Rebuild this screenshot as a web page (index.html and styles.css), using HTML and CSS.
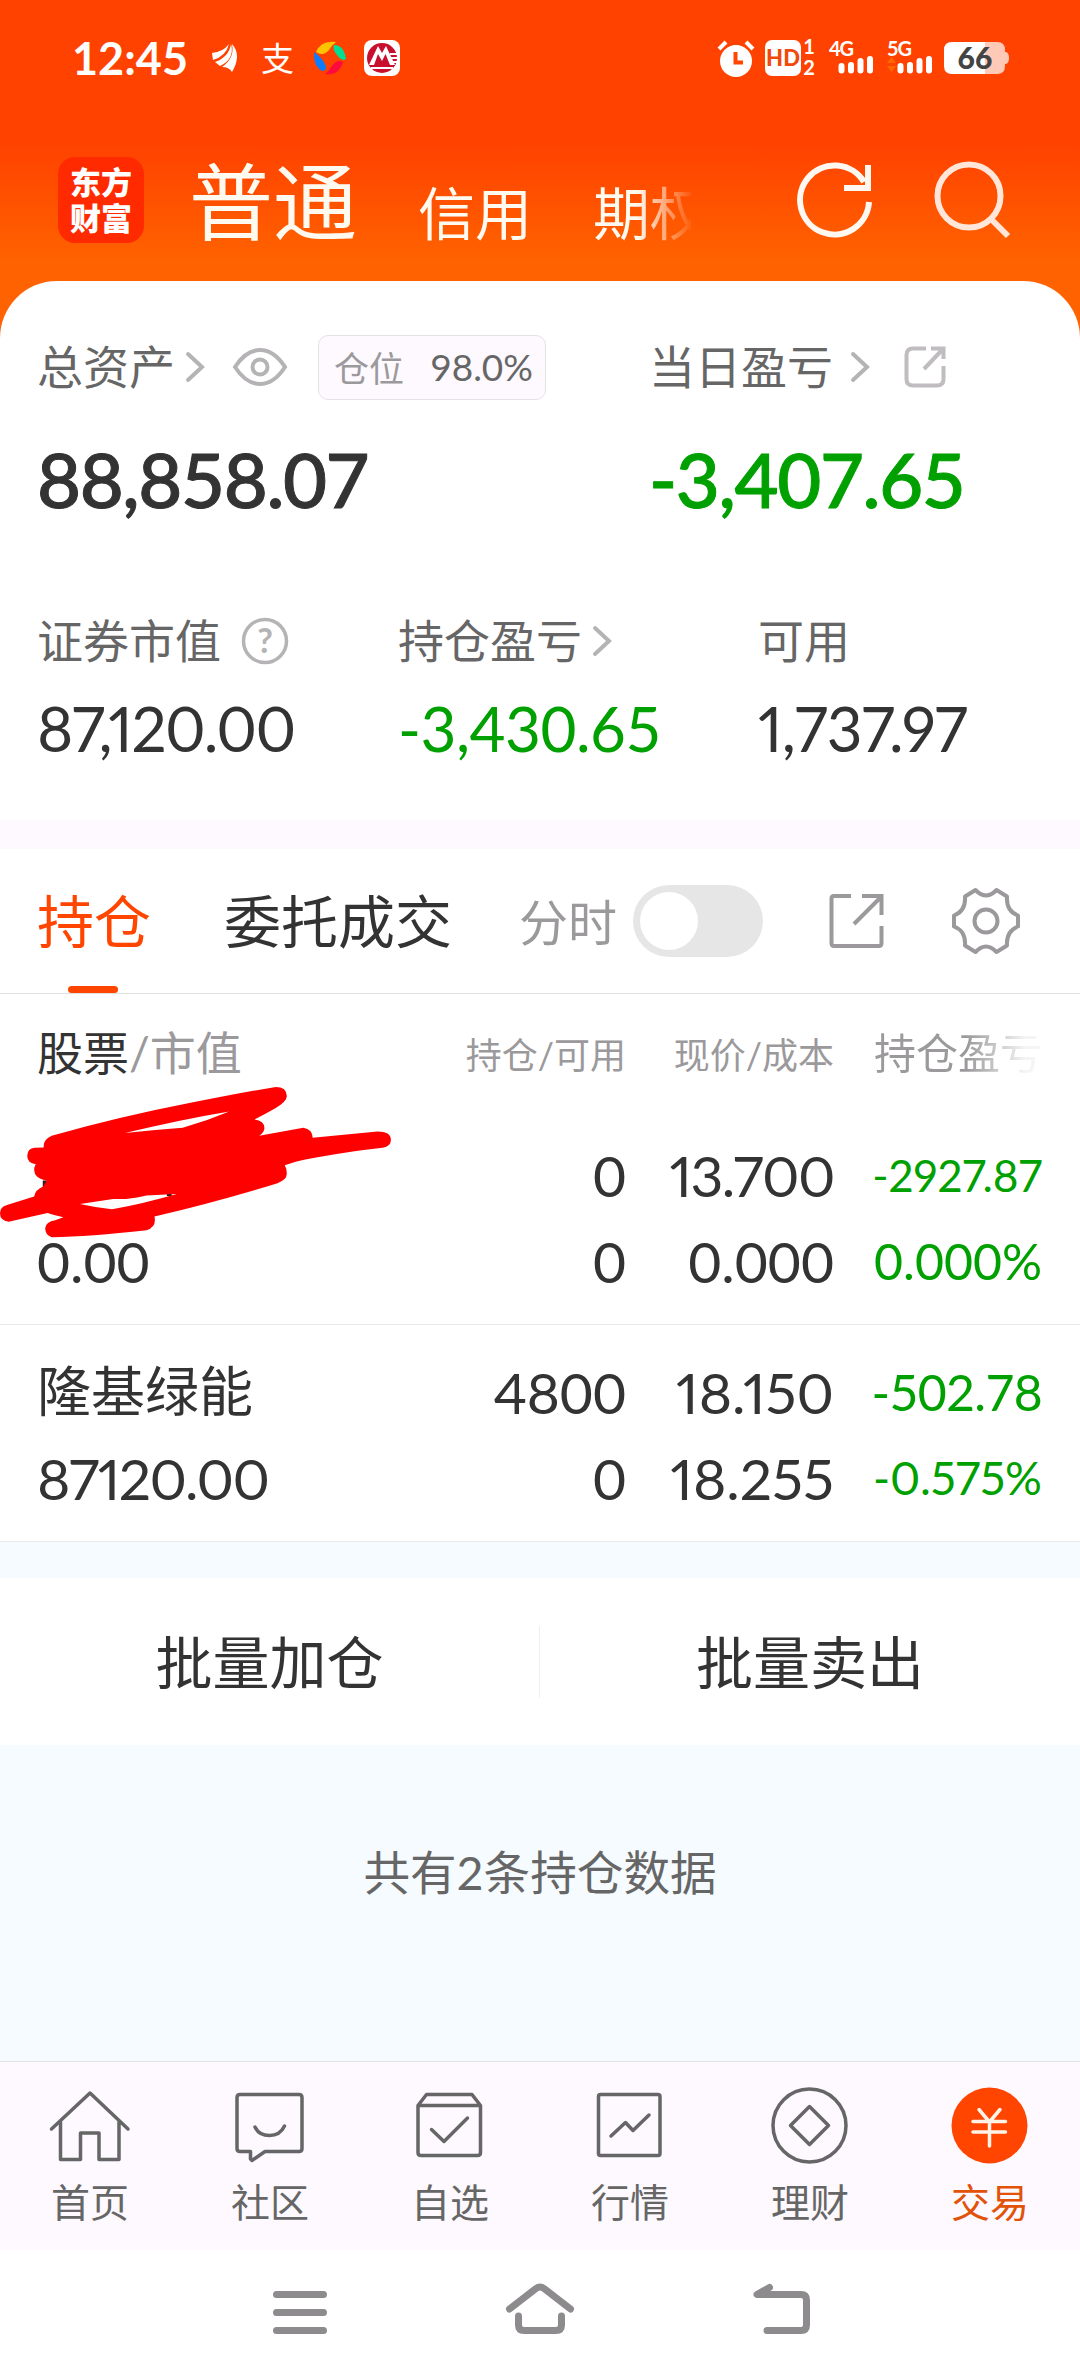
FILE: index.html
```html
<!DOCTYPE html>
<html lang="zh-CN">

<head>
    <meta charset="UTF-8">
    <meta name="viewport" content="width=device-width, initial-scale=1.0">
    <title>交易 - 持仓</title>
    <link rel="stylesheet" href="styles.css">
</head>

<body>
    <div class="hero">
        <div class="status">
            <span class="time">12:45</span>
            <svg class="s_wing" width="26" height="30" viewBox="0 0 26 30" fill="#fff">
                <path d="M0 10 Q11 9 17 1 Q14 13 1 17Z" />
                <path d="M3 19 Q17 14 19 1 Q23 16 8 23Z" />
                <path d="M10 24 Q23 15 20 1 Q30 12 20 29 Q17 24 10 24Z" />
            </svg>
            <span class="s_pay">支</span>
            <svg class="s_ball" width="36" height="36" viewBox="0 0 36 36">
                <path fill="#ffc400" d="M4 12 Q9 0 24 2 Q20 5 17 10 Q11 17 4 12Z" />
                <path fill="#00e092" d="M22 5 Q32 5 34 19 Q30 22 25 15 Q20 9 22 5Z" />
                <path fill="#ff0a3c" d="M31 22 Q27 36 13 34 Q17 31 20 26 Q25 19 31 22Z" />
                <path fill="#0a7cff" d="M2 12 Q10 18 13 24 Q16 31 10 31 Q1 26 2 12Z" />
            </svg>
            <svg class="s_bank" width="36" height="36" viewBox="0 0 36 36">
                <rect width="36" height="36" rx="8" fill="#fff" />
                <circle cx="18" cy="18" r="15" fill="#c8102e" />
                <path fill="#fff" d="M5 25 L14 6 L18 13 L22 6 L31 25 H26 L21.500 14 L18 21 L14 14 L10 25Z" />
                <path stroke="#fff" stroke-width="2" d="M26 14H36M27 18H36M28 22H36M7 28H29" />
            </svg>
            <svg class="s_alarm" width="36" height="37" viewBox="0 0 36 37">
                <circle cx="18" cy="21" r="16" fill="#fff" />
                <path stroke="#fff" stroke-width="4" d="M1 9L8 2M35 9L28 2" />
                <path stroke="#ff4500" stroke-width="4" fill="none" d="M17.500 12V22.500H25" />
            </svg>
            <svg class="s_hd" width="52" height="38" viewBox="0 0 52 38">
                <rect y="1" width="36" height="36" rx="7" fill="#fff" />
                <text x="18" y="27" class="hd_text">HD</text>
                <text x="44" y="15" class="sim_text">1</text>
                <text x="44" y="36" class="sim_text">2</text>
            </svg>
            <svg class="s_net" width="46" height="34" viewBox="0 0 46 34">
                <text x="0" y="15" class="net_text">4G</text>
                <path class="bars" d="M12.500 25V29.500M22 24V29.500M31.500 20V29.500M41 18V29.500" />
            </svg>
            <svg class="s_net s_net5" width="46" height="34" viewBox="0 0 46 34">
                <text x="0" y="15" class="net_text">5G</text>
                <path fill="#ff6a00" d="M0 22L4.500 16L9 22ZM0 25L4.500 31L9 25Z" />
                <path class="bars" d="M13.500 25V29.500M23 24V29.500M32.500 20V29.500M42 18V29.500" />
            </svg>
            <svg class="s_battery" width="66" height="34" viewBox="0 0 66 34">
                <path fill="#fff" d="M8 1H41V33H8Q0 33 0 25V9Q0 1 8 1Z" />
                <path fill="#ffc9b8" d="M41 1H53Q61 1 61 9V11H62Q65 12 65 17Q65 22 62 23H61V25Q61 33 53 33H41Z" />
                <text x="31" y="28" class="battery_text">66</text>
            </svg>
        </div>

        <div class="header">
            <div class="logo">东方<br>财富</div>
            <div class="account active">普通</div>
            <div class="account">信用</div>
            <div class="account fade">期权</div>
            <svg class="refresh" width="78" height="80" viewBox="0 0 78 80" fill="none" stroke="#fff8f0" stroke-width="6">
                <path d="M73 42A34.500 34.500 0 1 1 68 22" />
                <path d="M72 5V28H48" />
            </svg>
            <svg class="search" width="78" height="80" viewBox="0 0 78 80" fill="none" stroke="#ffe6d8" stroke-width="6">
                <circle cx="35" cy="36" r="31.500" />
                <path d="M57 59L74 76" />
            </svg>
        </div>

        <div class="card">
            <div class="assets">
                <div>
                    <div class="label">
                        <span>总资产</span>
                        <svg class="arrow" width="20" height="32" viewBox="0 0 20 32"><path d="M3 3L17 16L3 29" /></svg>
                        <svg class="eye" width="56" height="40" viewBox="0 0 56 40" fill="none" stroke="#b5b3b5" stroke-width="4">
                            <path d="M3 20Q14 3 28 3Q42 3 53 20Q42 37 28 37Q14 37 3 20Z" />
                            <circle cx="28" cy="20" r="7.500" />
                        </svg>
                        <span class="ratio">仓位<b>98.0%</b></span>
                    </div>
                    <div class="total">88,858.07</div>
                </div>
                <div>
                    <div class="label">
                        <span>当日盈亏</span>
                        <svg class="arrow day" width="20" height="32" viewBox="0 0 20 32"><path d="M3 3L17 16L3 29" /></svg>
                        <svg class="share" width="42" height="42" viewBox="0 0 42 42" fill="none" stroke="#c0bcc0" stroke-width="4">
                            <path d="M22 2.500H9Q2.500 2.500 2.500 9V33Q2.500 39.500 9 39.500H33Q39.500 39.500 39.500 33V20M27 2.500H39.500V13M39 3L20 23" />
                        </svg>
                    </div>
                    <div class="total green">-3,407.65</div>
                </div>
            </div>
            <div class="details">
                <div>
                    <div class="label">
                        <span>证券市值</span>
                        <svg class="help" width="48" height="48" viewBox="0 0 48 48">
                            <circle cx="24" cy="24" r="21.500" fill="none" stroke="#b5b3b5" stroke-width="3.500" />
                            <text x="24" y="36">?</text>
                        </svg>
                    </div>
                    <div class="value narrow">87,120.00</div>
                </div>
                <div>
                    <div class="label">
                        <span>持仓盈亏</span>
                        <svg class="arrow" width="20" height="32" viewBox="0 0 20 32"><path d="M3 3L17 16L3 29" /></svg>
                    </div>
                    <div class="value green">-3,430.65</div>
                </div>
                <div>
                    <div class="label"><span>可用</span></div>
                    <div class="value free">1,737.97</div>
                </div>
            </div>
        </div>
    </div>

    <div class="tabs">
        <div class="tab active">持仓</div>
        <div class="tab">委托成交</div>
        <div class="minute">分时</div>
        <div class="switch"></div>
        <svg class="export" width="56" height="56" viewBox="0 0 56 56" fill="none" stroke="#9b999b" stroke-width="4">
            <path d="M22 3H5Q2.500 3 2.500 5.500V50Q2.500 53 5 53H50Q52.500 53 52.500 50V33M33 3H52.500V22M52 4L25 31" />
        </svg>
        <svg class="gear" width="70" height="68" viewBox="-2 -2 70 68" fill="none" stroke="#9b999b" stroke-width="4" stroke-linejoin="round">
            <path d="M22.500 1Q33 12 43.500 1L54 7.500Q53 22 65 26.500V37.500Q53 42 54 56.500L43.500 63Q33 52 22.500 63L12 56.500Q13 42 1 37.500V26.500Q13 22 12 7.500Z" />
            <circle cx="33" cy="32" r="11.500" />
        </svg>
    </div>

    <div class="table">
        <div class="row head">
            <div class="stock">股票<i>/市值</i></div>
            <div>持仓/可用</div>
            <div>现价/成本</div>
            <div class="profit_title">持仓盈亏</div>
        </div>
        <div class="row">
            <div></div>
            <div>0</div>
            <div class="narrow">13.700</div>
            <div class="green f44">-2927.87</div>
            <div>0.00</div>
            <div>0</div>
            <div>0.000</div>
            <div class="green f50">0.000%</div>
            <!-- name crossed out by hand -->
            <svg class="scribble" viewBox="0 100 1140 470" preserveAspectRatio="none">
                <path fill="#222" d="M124 392H136V412H124ZM484 430H498V438H484Z" />
                <path fill="#f00" fill-rule="evenodd" d="M150 258Q350 200 560 158Q720 125 800 112Q832 112 832 140Q832 155 800 175Q770 193 738 209Q767 212 767 235Q767 248 752 258L880 234Q906 238 907 264L1095 245Q1134 245 1134 270Q1134 290 1110 294Q960 312 860 335L826 346Q832 355 832 372Q832 390 805 400Q640 453 448 500Q455 530 425 541Q260 560 150 562Q131 555 131 535Q133 515 160 511L184 502Q160 497 138 489L25 515Q0 512 0 490Q0 470 20 465L99 440Q102 420 125 410L135 393Q99 385 99 360Q99 350 104 343Q79 340 79 318Q80 295 100 294L127 293Q124 270 150 258ZM362 250Q450 240 530 234Q600 213 665 185Q520 210 362 250ZM232 462Q280 473 325 478Q420 460 512 432L425 437Q400 444 365 447L328 447Z" />
            </svg>
        </div>
        <div class="row">
            <div class="name">隆基绿能</div>
            <div>4800</div>
            <div class="prop">18.150</div>
            <div class="green f50 tight">-502.78</div>
            <div class="narrow">87120.00</div>
            <div>0</div>
            <div class="prop">18.255</div>
            <div class="green f46">-0.575%</div>
        </div>
    </div>

    <div class="batch">
        <div>批量加仓</div>
        <div>批量卖出</div>
    </div>

    <div class="summary">共有2条持仓数据</div>

    <div class="navi">
        <div>
            <svg viewBox="0 0 90 90"><path d="M6.500 50L45 14L83 50M15.500 43V80.500H35.500V54H54V80.500H74V43" /></svg>
            <p>首页</p>
        </div>
        <div>
            <svg viewBox="0 0 90 90"><path d="M15 15.500H74Q77 15.500 77 18.500V69.500Q77 72.500 74 72.500H40L27 81.500L25.500 80V72.500H15Q12 72.500 12 69.500V18.500Q12 15.500 15 15.500ZM30 48Q34 56.500 44.500 56.500Q55 56.500 59.500 47" /></svg>
            <p>社区</p>
        </div>
        <div>
            <svg viewBox="0 0 90 90"><path d="M13 26.500L21.500 15.500H67L75.500 26.500V73.500Q75.500 76.500 72.500 76.500H16Q13 76.500 13 73.500ZM13 26.500H75.500M26.500 50.500L39 62.500L62.500 39" /></svg>
            <p>自选</p>
        </div>
        <div>
            <svg viewBox="0 0 90 90"><rect x="13.500" y="15.500" width="61.500" height="61" rx="2" /><path d="M26 57L40.500 43.500L48 51.500L64 36" /></svg>
            <p>行情</p>
        </div>
        <div>
            <svg viewBox="0 0 90 90"><circle cx="44.500" cy="46.500" r="36.500" /><path d="M44.500 27.500L63.500 46.500L44.500 65.500L25.500 46.500Z" /></svg>
            <p>理财</p>
        </div>
        <div class="active">
            <svg viewBox="0 0 90 90"><circle cx="44.500" cy="46.500" r="38" /><path d="M34 30.500L44.500 43L55 30.500M28 42.500H60.500M28 53H60.500M44.500 42.500V67" /></svg>
            <p>交易</p>
        </div>
    </div>

    <div class="system">
        <svg width="60" height="60" viewBox="0 0 60 60"><path d="M6.500 12.500H53.500M6.500 30.500H53.500M6.500 48.500H53.500" /></svg>
        <svg width="72" height="60" viewBox="0 0 72 60"><path d="M5.500 27L32 6.500Q36 3.500 40 6.500L66.500 27M14.500 34V43Q14.500 48.500 20 48.500H52Q57.500 48.500 57.500 43V34" /></svg>
        <svg width="60" height="60" viewBox="0 0 60 60"><path d="M19.500 5.500L7 12.500H51Q56.500 12.500 56.500 18V43Q56.500 48.500 51 48.500H17" /></svg>
    </div>
</body>

</html>
```
FILE: styles.css
```css
* {
    margin: 0;
    padding: 0;
    box-sizing: border-box;
}

body {
    width: 1080px;
    height: 2376px;
    overflow: hidden;
    background: #fff;
    color: #333;
    font-family: Lato, "Noto Sans CJK SC", sans-serif;
    white-space: nowrap;
}

svg {
    display: block;
    flex: none;
    overflow: visible;
}

.green {
    color: #00a000;
}

.hero {
    background: linear-gradient(#ff4200 145px, #ff6200 260px);
    border-bottom: 29px solid #fdf9ff;
}

/* status bar */
.status {
    display: flex;
    align-items: center;
    height: 116px;
    padding-left: 72px;
    color: #fff;
}

.time {
    width: 116px;
    font-size: 45px;
    font-weight: bold;
}

.s_wing {
    margin-left: 24px;
}

.s_pay {
    width: 34px;
    margin-left: 23px;
    font-size: 33px;
    line-height: 36px;
}

.s_ball {
    margin-left: 17px;
}

.s_bank {
    margin-left: 16px;
}

.s_alarm {
    margin-left: 318px;
}

.s_hd {
    margin-left: 11px;
}

.s_net {
    margin-left: 12px;
}

.s_net5 {
    margin-left: 12px;
}

.s_battery {
    margin-left: 11px;
}

.status text {
    font-weight: bold;
    fill: #fff;
}

.status .hd_text {
    font-size: 22px;
    font-weight: 900;
    text-anchor: middle;
    fill: #f04a0a;
}

.status .sim_text {
    font-size: 20px;
    text-anchor: middle;
}

.status .net_text {
    font-size: 20px;
    letter-spacing: -1px;
}

.status .battery_text {
    font-size: 30px;
    font-weight: 900;
    text-anchor: middle;
    fill: #444;
}

.bars {
    stroke: #fff;
    stroke-width: 6;
    stroke-linecap: round;
}

/* account header */
.header {
    display: flex;
    align-items: center;
    height: 165px;
    padding: 3px 0 0 58px;
    color: #fffaf0;
}

.logo {
    width: 86px;
    height: 86px;
    padding-top: 7px;
    border-radius: 17px;
    background: #ff2a00;
    color: #fff;
    font-size: 31px;
    font-weight: 900;
    line-height: 36px;
    text-align: center;
}

.account {
    margin: 25px 0 0 61px;
    font-size: 57px;
    line-height: 60px;
}

.account.active {
    margin: 3px 0 0 45px;
    font-size: 84px;
    line-height: 90px;
}

.account.fade {
    width: 98px;
    overflow: hidden;
    background: linear-gradient(90deg, #fffaf0 45%, rgba(255, 250, 240, 0.05) 100%);
    -webkit-background-clip: text;
    background-clip: text;
    color: transparent;
}

.refresh {
    margin-left: 105px;
}

.search {
    margin-left: 60px;
}

/* assets card */
.card {
    height: 539px;
    padding: 54px 0 0 37px;
    border-radius: 57px 57px 0 0;
    background: #fff;
}

.assets {
    display: grid;
    grid-template-columns: 612px 1fr;
}

.details {
    display: grid;
    grid-template-columns: 361px 360px 1fr;
    margin-top: 98px;
}

.label {
    display: flex;
    align-items: center;
    height: 64px;
    color: #666;
    font-size: 46px;
}

.label > span:first-child {
    padding-bottom: 6px;
}

.details .label {
    height: 48px;
}

.arrow {
    margin-left: 10px;
    fill: none;
    stroke: #b5b3b5;
    stroke-width: 4;
    stroke-linecap: round;
}

.arrow.day {
    margin-left: 17px;
}

.eye {
    margin-left: 27px;
}

.ratio {
    display: flex;
    align-items: center;
    justify-content: space-between;
    width: 228px;
    height: 65px;
    margin-left: 30px;
    padding: 0 12px 2px 15px;
    border: 1px solid #e5e2e7;
    border-radius: 10px;
    background: #fdf9ff;
    color: #9b999b;
    font-size: 35px;
}

.ratio b {
    color: #666;
    font-size: 37px;
    font-weight: normal;
}

.share {
    margin-left: 34px;
}

.help {
    margin-left: 20px;
}

.help text {
    fill: #b5b3b5;
    font-size: 34px;
    font-weight: bold;
    text-anchor: middle;
}

.total {
    margin-top: 40px;
    font-size: 76px;
    font-weight: 500;
    line-height: 80px;
    letter-spacing: -1.4px;
    -webkit-text-stroke: 1px;
}

.value {
    margin-top: 33px;
    font-size: 62px;
    line-height: 60px;
    letter-spacing: -0.5px;
}

/* narrow "1" in the numbers */
.narrow,
.prop,
.free,
.f44,
.f46 {
    font-variant-numeric: proportional-nums;
}

.narrow {
    letter-spacing: -1.5px;
}

.free {
    letter-spacing: -0.9px;
}

.tight {
    letter-spacing: -0.7px;
}

/* tabs */
.tabs {
    display: flex;
    align-items: center;
    height: 145px;
    padding-left: 37px;
    border-bottom: 1px solid #e0e0e0;
}

.tab {
    margin-right: 73px;
    font-size: 57px;
    line-height: 145px;
    height: 145px;
}

.tab.active {
    position: relative;
    color: #ff4500;
}

.tab.active::after {
    content: "";
    position: absolute;
    left: 31px;
    bottom: 1px;
    width: 50px;
    height: 7px;
    border-radius: 4px;
    background: #ff4500;
}

.minute {
    margin-left: -6px;
    padding-bottom: 3px;
    color: #9b999b;
    font-size: 49px;
}

.switch {
    width: 130px;
    height: 72px;
    margin-left: 16px;
    padding: 7px;
    border-radius: 36px;
    background: #e6e6e6;
}

.switch::before {
    content: "";
    display: block;
    width: 58px;
    height: 58px;
    border-radius: 50%;
    background: #fff;
}

.export {
    margin-left: 66px;
}

.gear {
    margin-left: 66px;
}

/* positions */
.row {
    position: relative;
    display: grid;
    grid-template-columns: 300px 289px 208px 208px;
    align-content: start;
    height: 217px;
    padding: 24px 0 0 37px;
    border-bottom: 1px solid #e8e8e8;
    font-size: 57px;
    line-height: 86px;
    text-align: right;
}

.row > div:nth-child(4n + 1) {
    text-align: left;
}

.row.head {
    height: 114px;
    padding-top: 18px;
    border: none;
    color: #9b999b;
    font-size: 36px;
}

.row .stock {
    margin-top: -2px;
    color: #333;
    font-size: 46px;
}

.stock i {
    color: #9b999b;
    font-style: normal;
}

.row .profit_title {
    justify-self: end;
    margin-top: -2px;
    background: linear-gradient(90deg, #9b999b 55%, rgba(155, 153, 155, 0.1) 90%);
    -webkit-background-clip: text;
    background-clip: text;
    color: transparent;
    font-size: 42px;
}

.row .name {
    font-size: 54px;
}

.f44 {
    font-size: 44px;
}

.f46 {
    font-size: 46px;
}

.f50 {
    font-size: 50px;
}

.scribble {
    position: absolute;
    left: 0;
    top: -25px;
    width: 393px;
    height: 157px;
}

.batch {
    display: grid;
    grid-template-columns: 1fr 1fr;
    align-items: center;
    height: 203px;
    border-top: 36px solid #f5fbff;
    font-size: 57px;
    line-height: 72px;
    text-align: center;
}

.batch div:first-child {
    border-right: 1px solid #eee;
}

.summary {
    height: 316px;
    padding-top: 92px;
    background: #f5fbff;
    color: #666;
    font-size: 46.6px;
    line-height: 70px;
    text-align: center;
}

/* bottom navigation */
.navi {
    display: grid;
    grid-template-columns: repeat(6, 1fr);
    height: 189px;
    padding-top: 17px;
    border-top: 1px solid #e3e3e6;
    background: #fdf9ff;
    color: #666;
    font-size: 39px;
    line-height: 50px;
    text-align: center;
}

.navi svg {
    width: 90px;
    height: 90px;
    margin: 0 auto 8px;
    fill: none;
    stroke: #666;
    stroke-width: 3.5;
    stroke-linecap: round;
    stroke-linejoin: round;
}

.navi .active {
    color: #e25208;
}

.navi .active svg {
    stroke: #fff3e8;
}

.navi .active circle {
    fill: #ff4500;
    stroke: none;
}

/* system keys */
.system {
    display: flex;
    padding: 32px 0 0 270px;
    gap: 174px;
}

.system svg {
    fill: none;
    stroke: #8e8b8e;
    stroke-width: 7;
    stroke-linecap: round;
    stroke-linejoin: round;
}
```
